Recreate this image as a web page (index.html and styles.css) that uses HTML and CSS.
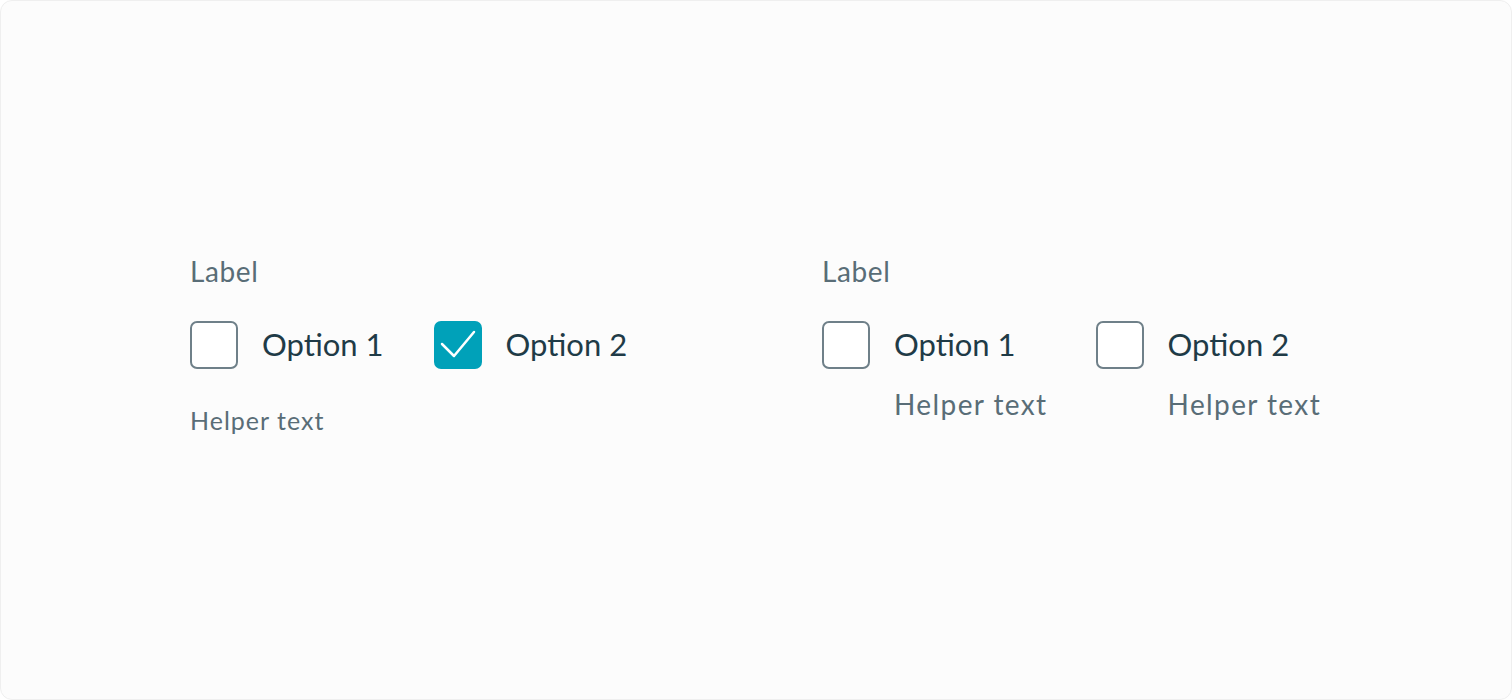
FILE: index.html
```html
<!DOCTYPE html>
<html lang="en">
<head>
  <meta charset="UTF-8" />
  <meta name="viewport" content="width=device-width, initial-scale=1.0" />
  <title>Checkbox group</title>
  <link rel="stylesheet" href="styles.css">
</head>
<body>
  <main class="card">
    <!-- Inline options, one helper text for the group -->
    <section class="group group-inline">
      <div class="group-label">Label</div>
      <div class="options">
        <label class="option">
          <span class="box"></span>
          <span class="option-text">Option 1</span>
        </label>
        <label class="option">
          <span class="box checked">
            <svg viewBox="0 0 48 48" width="48" height="48"><path d="M8 23 L20 35 L40 11" /></svg>
          </span>
          <span class="option-text">Option 2</span>
        </label>
      </div>
      <div class="helper">Helper text</div>
    </section>

    <!-- Helper text under each option -->
    <section class="group group-stacked">
      <div class="group-label">Label</div>
      <div class="options">
        <div class="option-item">
          <label class="option">
            <span class="box"></span>
            <span class="option-text">Option 1</span>
          </label>
          <div class="option-helper">Helper text</div>
        </div>
        <div class="option-item">
          <label class="option">
            <span class="box"></span>
            <span class="option-text">Option 2</span>
          </label>
          <div class="option-helper">Helper text</div>
        </div>
      </div>
    </section>
  </main>
</body>
</html>
```

FILE: styles.css
```css
:root {
  --text-main: #1f3b47;
  --text-muted: #596d77;
  --border: #6f8089;
  --teal: #00a1b9;
  --card-bg: #fcfcfc;
}

body {
  margin: 0;
  background: #ffffff;
  font-family: Lato, 'Open Sans', sans-serif;
}

.card {
  box-sizing: border-box;
  height: 700px;
  border: 1px solid #efefef;
  border-radius: 12px;
  background: var(--card-bg);
  display: grid;
  grid-template-columns: 632px auto;
  align-items: start;
  padding: 250px 0 0 189px;
}

/* === GROUP === */
.group-label {
  font-size: 28px;
  line-height: 40px;
  letter-spacing: 0.6px;
  color: var(--text-muted);
  margin-bottom: 30px;
}

.options {
  display: flex;
  align-items: flex-start;
}

.group-inline .options {
  gap: 50px;
}

.group-stacked .options {
  gap: 48px;
}

.option {
  display: flex;
  align-items: center;
  gap: 24px;
  cursor: pointer;
}

.box {
  box-sizing: border-box;
  width: 48px;
  height: 48px;
  border: 2px solid var(--border);
  border-radius: 7px;
  background: #ffffff;
  flex-shrink: 0;
}

.box.checked {
  border: none;
  background: var(--teal);
}

.box svg {
  display: block;
}

.box svg path {
  fill: none;
  stroke: #ffffff;
  stroke-width: 2.5;
  stroke-linecap: round;
  stroke-linejoin: round;
}

.option-text {
  font-size: 31px;
  line-height: 44px;
  padding-bottom: 2px;
  color: var(--text-main);
}

.helper {
  margin-top: 35px;
  font-size: 25px;
  line-height: 32px;
  letter-spacing: 1px;
  color: var(--text-muted);
}

.option-helper {
  margin: 15px 0 0 72px;
  font-size: 28px;
  line-height: 40px;
  letter-spacing: 1.4px;
  color: var(--text-muted);
}
```
